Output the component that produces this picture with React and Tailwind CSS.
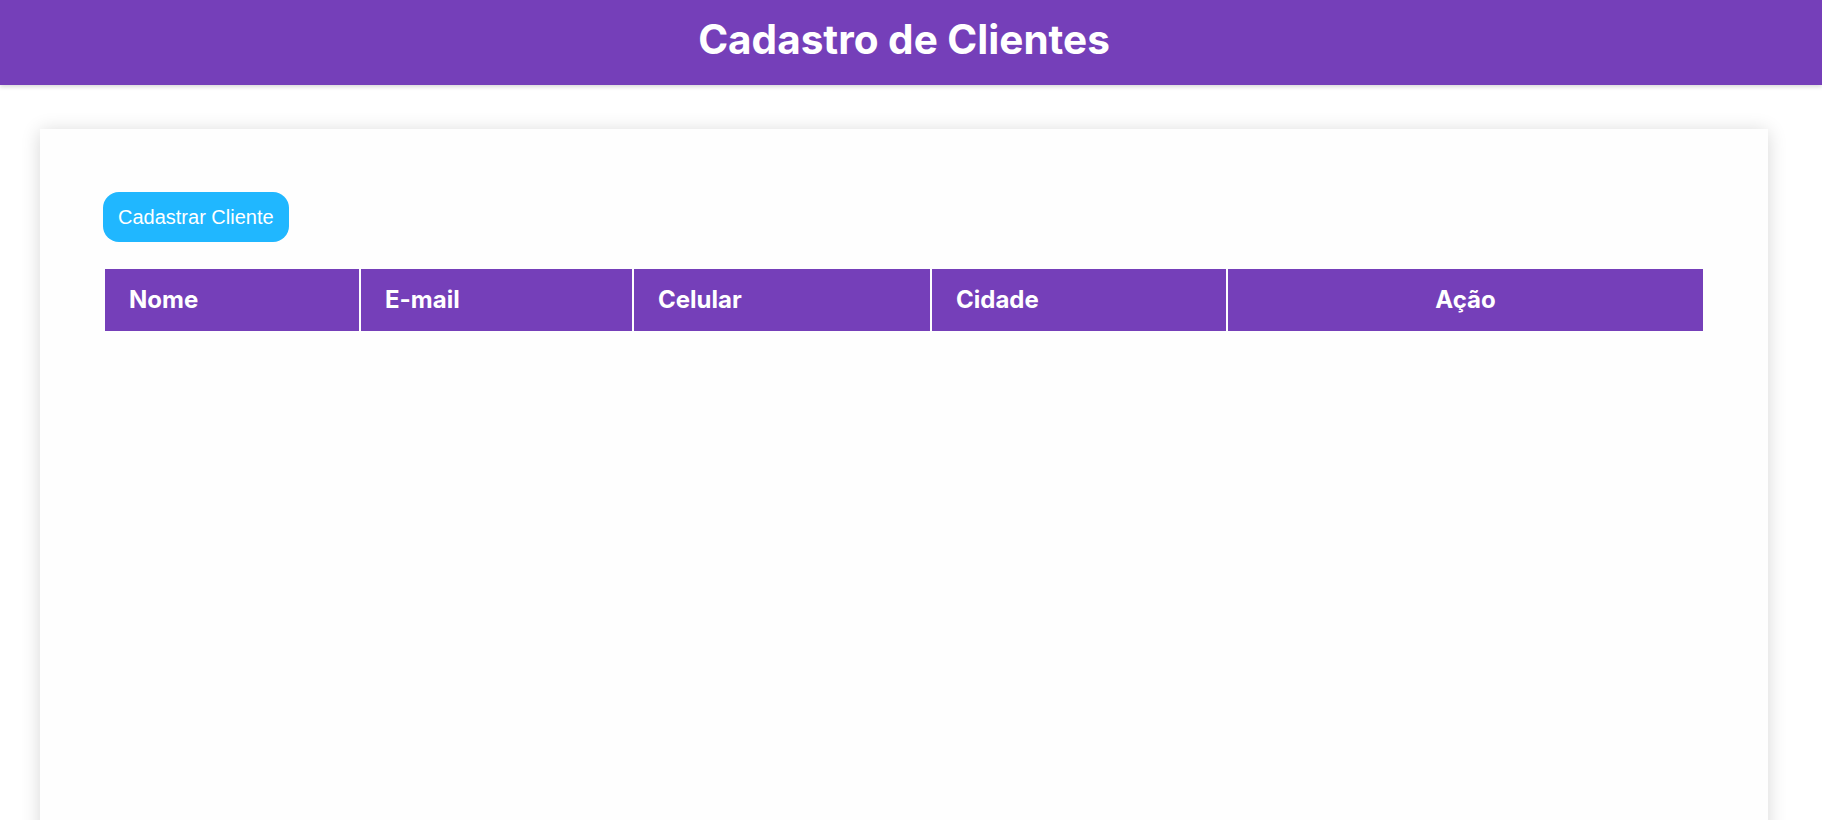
import React from 'react';

const columns = [
  { label: 'Nome', width: 'w-[254px]', align: 'text-left' },
  { label: 'E-mail', width: 'w-[271px]', align: 'text-left' },
  { label: 'Celular', width: 'w-[296px]', align: 'text-left' },
  { label: 'Cidade', width: 'w-[294px]', align: 'text-left' },
  { label: 'Ação', width: '', align: 'text-center' },
];

export default function App() {
  return (
    <div className="min-h-screen bg-white font-['Inter',sans-serif]">
      {/* Header */}
      <header className="h-[85px] bg-[#753fb9] flex items-center justify-center pr-[14px] shadow-[0_2px_4px_rgba(0,0,0,0.15)] relative z-10">
        <h1 className="text-[40.5px] font-bold text-white leading-none -mt-[4px]">Cadastro de Clientes</h1>
      </header>

      {/* Card */}
      <main className="pl-[40px] pr-[54px] pt-[44px]">
        <div className="bg-[#fefefe] shadow-[0_2px_18px_rgba(0,0,0,0.16)] min-h-[760px] px-[63px] pt-[63px]">
          <button className="h-[50px] px-[15px] rounded-[16px] bg-[#20b7ff] text-white text-[20px] font-['Liberation_Sans',Arial,sans-serif]">
            Cadastrar Cliente
          </button>

          <table className="mt-[25px] w-full border-separate border-spacing-[2px]">
            <thead>
              <tr>
                {columns.map((col, index) => (
                  <th
                    key={index}
                    className={`${col.width} ${col.align} h-[62px] bg-[#753fb9] text-white text-[24px] font-bold px-[24px]`}
                  >
                    {col.label}
                  </th>
                ))}
              </tr>
            </thead>
            <tbody></tbody>
          </table>
        </div>
      </main>
    </div>
  );
}
